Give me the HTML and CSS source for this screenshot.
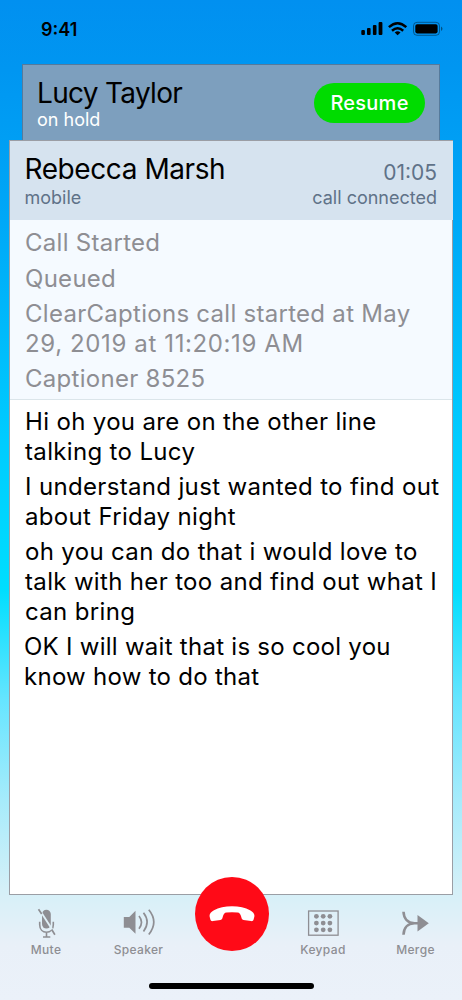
FILE: index.html
```html
<!DOCTYPE html>
<html lang="en">
<head>
<meta charset="utf-8">
<title>Call</title>
<link rel="stylesheet" href="styles.css">
</head>
<body>
<div class="phone">
  <header class="status">
    <span class="clock">9:41</span>
    <svg class="status-icons" width="84" height="18" viewBox="0 0 84 18">
      <rect x="1.300" y="10" width="3.600" height="5" rx="1"/>
      <rect x="7" y="8" width="3.600" height="7" rx="1"/>
      <rect x="12.900" y="5" width="3.600" height="10" rx="1"/>
      <rect x="18.600" y="2" width="3.800" height="13" rx="1"/>
      <g fill="none" stroke="#000" stroke-width="2.500">
        <path d="M28.900 7.100Q37.600-.7 46.300 7.100"/>
        <path d="M32 10.800Q37.600 5.800 43.200 10.800"/>
      </g>
      <path d="M34.700 12.400Q37.600 10.200 40.500 12.400L37.600 15.300Z"/>
      <rect x="53.500" y="2.300" width="26" height="13" rx="3.500" fill="none" stroke="#000" stroke-opacity=".4"/>
      <rect x="55.300" y="4.200" width="22.300" height="9.200" rx="1.800"/>
      <path d="M81 6.600v4.400q1.500-.7 1.500-2.200T81 6.600" fill-opacity=".45"/>
    </svg>
  </header>
  <section class="held">
    <div>
      <h2 class="name held-name">Lucy Taylor</h2>
      <p class="held-state">on hold</p>
    </div>
    <button class="resume"><span>Resume</span></button>
  </section>
  <main class="call">
    <div class="call-head">
      <div>
        <h1 class="name">Rebecca Marsh</h1>
        <p class="line">mobile</p>
      </div>
      <div class="call-info">
        <p class="timer">01:05</p>
        <p class="line">call connected</p>
      </div>
    </div>
    <div class="log">
      <p>Call Started</p>
      <p>Queued</p>
      <p>ClearCaptions call started at May<br><span class="date">29, 2019 at 11:20:19 AM</span></p>
      <p>Captioner 8525</p>
    </div>
    <div class="captions">
      <p>Hi oh you are on the other line<br>talking to Lucy</p>
      <p>I understand just wanted to find out<br>about Friday night</p>
      <p>oh you can do that i would love to<br>talk with her too and find out what I<br>can bring</p>
      <p class="latest">OK I will wait that is so cool you<br>know how to do that</p>
    </div>
  </main>
  <nav class="bar">
    <div class="item">
      <svg width="36" height="32" viewBox="0 0 36 32">
        <rect x="14" y="2.700" width="8.800" height="18.800" rx="4.400" fill="#8e8e93"/>
        <path d="M11.700 14.700v3c0 4.700 3 7.500 6.800 7.500s6.800-2.800 6.800-7.500v-3M18.500 25v4.500M15 30h7.300" fill="none" stroke="#8e8e93" stroke-width="1.600"/>
        <path d="M12.800 4.700L25.200 24" stroke="#e0f0f7" stroke-width="1.900"/>
        <path d="M10.500 2.200L13.700 7M23.700 22.500L26.900 27.700" stroke="#8e8e93" stroke-width="1.700"/>
      </svg>
      <span>Mute</span>
    </div>
    <div class="item">
      <svg width="36" height="32" viewBox="0 0 36 32" fill="none" stroke="#8e8e93" stroke-width="1.700">
        <path d="M2.800 10h5.500L14.500 3.700v23L8.300 20.700H2.800z" fill="#8e8e93" stroke="none"/>
        <path d="M18 9q5 6.300 0 12.800M22.500 5.700q7.200 9.300 0 18.800M27.800 2.700q10 12.300 0 24.800"/>
      </svg>
      <span>Speaker</span>
    </div>
    <button class="hangup" aria-label="End call">
      <svg width="46" height="18" viewBox="0 0 46 18"><path d="M1 13C-.3 9.500 1.300 7.500 5 5.200C9.500 2.500 16 1.200 23 1.200S36.500 2.500 41 5.200C44.700 7.500 46.300 9.500 45 13C44.500 15.600 43.800 16.300 42 16.100L34.500 15C32.900 14.600 32.700 13.700 32.200 11.800C31.500 9 30.500 7.800 28.500 7.600Q23 7.100 17.500 7.600C15.500 7.800 14.500 9 13.800 11.800C13.300 13.700 13.100 14.600 11.500 15L4 16.100C2.200 16.300 1.500 15.600 1 13Z" fill="#fff"/></svg>
    </button>
    <div class="item">
      <svg width="36" height="32" viewBox="0 0 36 32" fill="#8e8e93">
        <rect x="3.600" y="4" width="29.500" height="24.200" fill="none" stroke="#8e8e93" stroke-width="1.300"/>
        <circle cx="11.400" cy="9.300" r="2.400"/><circle cx="18.200" cy="9.300" r="2.400"/><circle cx="24.900" cy="9.300" r="2.400"/>
        <circle cx="11.400" cy="16.100" r="2.400"/><circle cx="18.200" cy="16.100" r="2.400"/><circle cx="24.900" cy="16.100" r="2.400"/>
        <circle cx="11.400" cy="22.800" r="2.400"/><circle cx="18.200" cy="22.800" r="2.400"/><circle cx="24.900" cy="22.800" r="2.400"/>
      </svg>
      <span>Keypad</span>
    </div>
    <div class="item">
      <svg width="36" height="32" viewBox="0 0 36 32" fill="none" stroke="#8e8e93" stroke-width="2.600">
        <path d="M5.500 4.700c.3 7 4.500 11.500 11 11.500h5M5.500 27.700c.3-7 4.500-11.500 11-11.500"/>
        <path d="M19.500 8L30.800 16.200L19.500 24.400Z" fill="#8e8e93" stroke="none"/>
      </svg>
      <span>Merge</span>
    </div>
  </nav>
  <div class="home"></div>
</div>
</body>
</html>
```
FILE: styles.css
```css
* { box-sizing: border-box; }
body, h1, h2, p { margin: 0; }
body { font-family: Inter, "Liberation Sans", sans-serif; }
button { border: 0; padding: 0; font-family: inherit; }

.phone {
  width: 462px;
  height: 1000px;
  overflow: hidden;
  display: flex;
  flex-direction: column;
  background: linear-gradient(#0190f0 0, #0096f1 70px, #00a8f7 220px, #00ccff 440px, #00deff 590px, #66e5ff 700px, #a6ebfb 800px, #d5f0f8 890px, #e9f0f8 945px, #ebf1f9 1000px);
}

.status {
  height: 64px;
  padding: 20px 18px 0 41px;
  display: flex;
  justify-content: space-between;
}
.clock { font-size: 18px; font-weight: 600; line-height: 19px; letter-spacing: 0; }
.status-icons { display: block; }

.held {
  height: 76px;
  margin: 0 22px;
  padding: 13px 14px 0 14px;
  display: flex;
  justify-content: space-between;
  background: #7d9fbe;
  border: 1px solid #557a9c;
  border-width: 1px 1px 0;
}
.name { font-size: 28px; font-weight: 400; line-height: 31px; letter-spacing: -.42px; white-space: nowrap; }
.held-name { letter-spacing: -.7px; }
.held-state { font-size: 18px; line-height: 22px; color: #fff; }
.resume {
  width: 111px;
  height: 40px;
  margin-top: 4.500px;
  border-radius: 20px;
  background: #00dc00;
  color: #fff;
  font-size: 20px;
  font-weight: 500;
  letter-spacing: .25px;
}

.call {
  height: 755px;
  flex: none;
  margin: 0 9px;
  background: #fff;
  border: 1px solid #9b9ea5;
}
.call-head {
  height: 79px;
  margin-right: -1px;
  padding: 13px 16px 0 14.500px;
  display: flex;
  justify-content: space-between;
  background: #d6e3ef;
}
.line { font-size: 18px; line-height: 25px; color: #5f7288; white-space: nowrap; }
.call-info { text-align: right; }
.timer { font-size: 21px; line-height: 31px; padding-top: 3px; margin-bottom: -3px; color: #5f7288; }

.log, .captions {
  padding: 8px 0 0 15px;
  font-size: 24px;
  line-height: 29.600px;
  white-space: nowrap;
}
.log { height: 180px; color: #8e8e93; background: #f5faff; border-bottom: 1px solid #dbe5ea; letter-spacing: .28px; }
.date { letter-spacing: .62px; }
.captions { padding-top: 7px; letter-spacing: .34px; }
.log p, .captions p { margin-bottom: 6px; }
.captions .latest { margin-left: -1px; letter-spacing: .27px; }

.bar {
  height: 83px;
  flex: none;
  display: grid;
  grid-template-columns: 92px 93px 92px 92px 93px;
}
.item {
  padding-top: 12px;
  display: flex;
  flex-direction: column;
  align-items: center;
  font-size: 12px;
  font-weight: 500;
  line-height: 21px;
  letter-spacing: .35px;
  color: #8e8e93;
}
.item svg { flex: none; }
.hangup {
  width: 74px;
  height: 74px;
  margin: -18px 0 0 10px;
  padding-bottom: 1px;
  border-radius: 50%;
  background: #ff0a17;
  display: flex;
  align-items: center;
  justify-content: center;
}
.home { width: 165px; height: 6px; margin: 5px auto 0; border-radius: 3px; background: #000; }
```
